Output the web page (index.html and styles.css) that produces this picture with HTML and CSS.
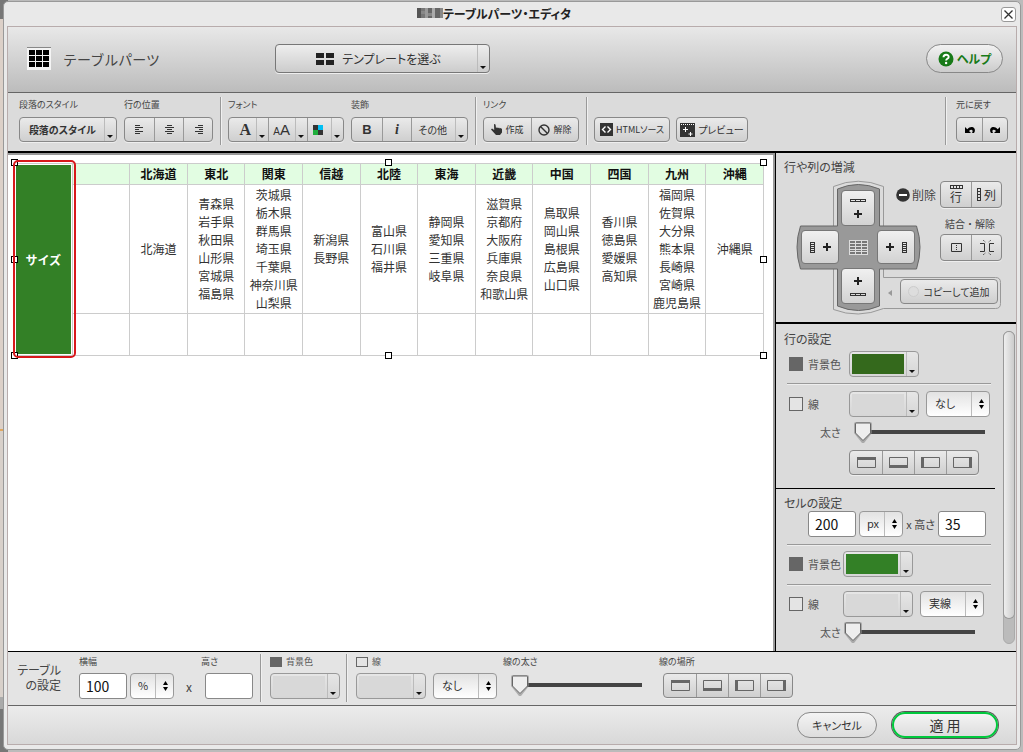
FILE: index.html
```html
<!DOCTYPE html>
<html lang="ja">
<head>
<meta charset="utf-8">
<title>テーブルパーツ・エディタ</title>
<link rel="stylesheet" href="styles.css">
</head>
<body>
<svg class="defs" width="0" height="0" aria-hidden="true">
  <symbol id="updown" viewBox="0 0 5 10"><path d="M2.500 0 5 4H0zM0 6h5L2.500 10z"/></symbol>
  <symbol id="line-top" viewBox="0 0 19 11"><path fill="none" stroke="#666" d="M.5.5h18v10H.5z"/><path fill="#666" d="M0 0h19v3H0z"/></symbol>
  <symbol id="line-bottom" viewBox="0 0 19 11"><path fill="none" stroke="#666" d="M.5.5h18v10H.5z"/><path fill="#666" d="M0 8h19v3H0z"/></symbol>
  <symbol id="line-left" viewBox="0 0 19 11"><path fill="none" stroke="#666" d="M.5.5h18v10H.5z"/><path fill="#666" d="M0 0h3v11H0z"/></symbol>
  <symbol id="line-right" viewBox="0 0 19 11"><path fill="none" stroke="#666" d="M.5.5h18v10H.5z"/><path fill="#666" d="M16 0h3v11h-3z"/></symbol>
  <symbol id="row-strip" viewBox="0 0 16 3"><path d="M0 0h16v3H0zM1 1v1h4V1zM6 1v1h4V1zM11 1v1h4V1z" fill="#333" fill-rule="evenodd"/></symbol>
  <symbol id="col-strip" viewBox="0 0 5 11"><path d="M0 0h5v11H0zM1 1v1h3V1zM1 3v1h3V3zM1 5v1h3V5zM1 7v1h3V7zM1 9v1h3V9z" fill="#333" fill-rule="evenodd"/></symbol>
  <symbol id="plus" viewBox="0 0 8 8"><path fill="#222" d="M3 0h2v3h3v2H5v3H3V5H0V3h3z"/></symbol>
</svg>

<main class="window">
  <header class="titlebar">
    <h1 class="title">
      <svg width="26" height="10" viewBox="0 0 26 10" aria-hidden="true"><path fill="#555" d="M0 0h4v10H0z"/><path fill="#777" d="M4 0h4v10H4z"/><path fill="#999" d="M8 0h3v10H8z"/><path fill="#666" d="M11 0h4v10h-4z"/><path fill="#aaa" d="M15 0h3v10h-3z"/><path fill="#666" d="M18 0h5v10h-5z"/><path fill="#888" d="M23 0h3v10h-3zM4 3h4v3H4zM11 5h4v3h-4z"/></svg>テーブルパーツ・エディタ
    </h1>
    <button class="close" aria-label="閉じる"><svg width="9" height="9" viewBox="0 0 9 9"><path d="M.5.5l8 8M8.500.5l-8 8" stroke="#333" stroke-width="1.300"/></svg></button>
  </header>

  <div class="frame">
    <div class="header">
      <svg width="24" height="23" viewBox="0 0 24 23" aria-hidden="true"><path fill="#f4f4f4" d="M0 0h24v23H0z"/><path fill="#888" d="M0 0h24v1H0z"/><path d="M2 3h6v5H2zM9 3h6v5H9zM16 3h6v5h-6zM2 9h6v5H2zM9 9h6v5H9zM16 9h6v5h-6zM2 15h6v5H2zM9 15h6v5H9zM16 15h6v5h-6z"/></svg>
      <span class="part-name">テーブルパーツ</span>
      <button class="template">
        <span class="template-label"><svg width="18" height="12" viewBox="0 0 18 12"><path fill="#222" d="M0 0h8v5H0zM10 0h8v5h-8zM0 7h8v5H0zM10 7h8v5h-8z"/></svg>テンプレートを選ぶ</span>
        <span class="drop"></span>
      </button>
      <button class="help"><svg width="16" height="16" viewBox="0 0 16 16"><circle cx="8" cy="8" r="7.500" fill="#187a18"/><path d="M5.500 6.200c0-3.400 5.200-3.200 5.200-.3 0 1.900-2.600 1.900-2.600 3.500" fill="none" stroke="#fff" stroke-width="1.900"/><circle cx="8.100" cy="12" r="1.200" fill="#fff"/></svg>ヘルプ</button>
    </div>

    <div class="toolbar">
      <div class="group">
        <span class="caption">段落のスタイル</span>
        <div class="buttons"><button class="with-drop w-para"><b>段落のスタイル</b><span class="drop"></span></button></div>
      </div>
      <div class="group">
        <span class="caption">行の位置</span>
        <div class="buttons">
          <button class="w29" aria-label="左寄せ"><svg width="9" height="9" viewBox="0 0 9 9"><path stroke="#333" d="M0 .5h5M0 2.500h8M0 4.500h4M0 6.500h8M0 8.500h5"/></svg></button>
          <button class="w29" aria-label="中央寄せ"><svg width="9" height="9" viewBox="0 0 9 9"><path stroke="#333" d="M2 .5h5M0 2.500h9M2 4.500h5M0 6.500h9M2 8.500h5"/></svg></button>
          <button class="w29" aria-label="右寄せ"><svg width="9" height="9" viewBox="0 0 9 9"><path stroke="#333" d="M4 .5h5M1 2.500h8M5 4.500h4M1 6.500h8M4 8.500h5"/></svg></button>
        </div>
      </div>
      <span class="rule"></span>
      <div class="group">
        <span class="caption">フォント</span>
        <div class="buttons">
          <button class="with-drop w-font"><span class="serif-a">A</span><span class="drop"></span></button>
          <button class="with-drop w-font"><span class="size-a"><small>A</small>A</span><span class="drop"></span></button>
          <button class="with-drop w-color" aria-label="文字色"><svg width="10" height="10" viewBox="0 0 10 10"><path fill="#333" d="M0 0h10v10H0z"/><path fill="#00bff3" d="M5 0h5v5H5z"/><path fill="#1fae3b" d="M0 5h5v5H0z"/></svg><span class="drop"></span></button>
        </div>
      </div>
      <div class="group">
        <span class="caption">装飾</span>
        <div class="buttons">
          <button class="w30"><span class="bold-b">B</span></button>
          <button class="w29"><span class="italic-i">i</span></button>
          <button class="with-drop w-other">その他<span class="drop"></span></button>
        </div>
      </div>
      <span class="rule"></span>
      <div class="group">
        <span class="caption">リンク</span>
        <div class="buttons">
          <button class="w-link"><svg width="11" height="11" viewBox="0 0 11 11"><path fill="#333" d="M3 0l1.500.4L5 4l1-.8 1 1 1-.7.8 1 .9-.5L11 5v3.500L9 11H5L0 5.500l1-1L3.200 6z"/></svg>作成</button>
          <button class="w-link"><svg width="12" height="12" viewBox="0 0 12 12"><circle cx="6" cy="6" r="5" fill="none" stroke="#333" stroke-width="1.400"/><path d="M2.500 2.500l7 7" stroke="#333" stroke-width="1.400"/></svg>解除</button>
        </div>
      </div>
      <span class="rule"></span>
      <div class="group actions">
        <div class="buttons"><button class="w-html"><svg width="13" height="13" viewBox="0 0 13 13"><path fill="#333" d="M0 0h13v13H0z"/><path fill="none" stroke="#fff" stroke-width="1.400" d="M5.500 3.500l-3 3 3 3M7.500 3.500l3 3-3 3"/></svg>HTMLソース</button></div>
        <div class="buttons"><button class="w-preview"><svg width="15" height="14" viewBox="0 0 15 14"><path fill="#333" d="M0 0h15v14H0z"/><path stroke="#fff" d="M1 1.500h13" stroke-dasharray="1 1"/><path stroke="#fff" d="M5.500 4v5M3 6.500h5M10.500 9v4M8.500 11h4"/></svg>プレビュー</button></div>
      </div>
      <span class="rule last-rule"></span>
      <div class="group history">
        <span class="caption">元に戻す</span>
        <div class="buttons">
          <button class="w25" aria-label="元に戻す"><svg width="10" height="8" viewBox="0 0 10 8"><path d="M0 1v6h6L4 5c1.500-1.500 3-1.600 3.500-.4.300.9 0 1.800-.7 2.400H9C10.600 4.500 10 2 8 1.200 6 .4 4 1.300 2.300 3.200z"/></svg></button>
          <button class="w25" aria-label="やり直す"><svg width="10" height="8" viewBox="0 0 10 8"><path d="M10 1v6H4l2-2C4.500 3.500 3 3.400 2.500 4.600c-.3.900 0 1.800.7 2.400H1C-.6 4.500 0 2 2 1.200 4 .4 6 1.300 7.700 3.200z"/></svg></button>
        </div>
      </div>
    </div>

    <div class="work">
      <section class="canvas">
        <div class="sheet">
          <table class="regions">
            <colgroup><col><col><col><col><col><col><col><col><col><col><col><col><col></colgroup>
            <tr>
              <th class="selected" rowspan="3">サイズ</th>
              <th></th><th>北海道</th><th>東北</th><th>関東</th><th>信越</th><th>北陸</th><th>東海</th><th>近畿</th><th>中国</th><th>四国</th><th>九州</th><th>沖縄</th>
            </tr>
            <tr>
              <td></td>
              <td>北海道</td>
              <td>青森県<br>岩手県<br>秋田県<br>山形県<br>宮城県<br>福島県</td>
              <td>茨城県<br>栃木県<br>群馬県<br>埼玉県<br>千葉県<br>神奈川県<br>山梨県</td>
              <td>新潟県<br>長野県</td>
              <td>富山県<br>石川県<br>福井県</td>
              <td>静岡県<br>愛知県<br>三重県<br>岐阜県</td>
              <td>滋賀県<br>京都府<br>大阪府<br>兵庫県<br>奈良県<br>和歌山県</td>
              <td>鳥取県<br>岡山県<br>島根県<br>広島県<br>山口県</td>
              <td>香川県<br>徳島県<br>愛媛県<br>高知県</td>
              <td>福岡県<br>佐賀県<br>大分県<br>熊本県<br>長崎県<br>宮崎県<br>鹿児島県</td>
              <td>沖縄県</td>
            </tr>
            <tr class="blank"><td></td><td></td><td></td><td></td><td></td><td></td><td></td><td></td><td></td><td></td><td></td><td></td></tr>
          </table>
          <i class="handle nw"></i><i class="handle n"></i><i class="handle ne"></i>
          <i class="handle w"></i><i class="handle e"></i>
          <i class="handle sw"></i><i class="handle s"></i><i class="handle se"></i>
          <i class="marker"></i>
        </div>
      </section>

      <aside class="side">
        <section class="structure">
          <h2>行や列の増減</h2>
          <div class="insert">
            <div class="pad">
              <svg class="pad-shape" width="206" height="134" viewBox="0 0 206 134" aria-hidden="true">
                <path d="M38.500 46V5.500Q63-5 88.500 5.500V46M88.500 88v8.500h112q5 0 5 5v21q0 5-5 5h-112Q63 138 38.500 128.500V88" fill="none" stroke="#999"/>
                <path d="M42.500 8Q63-1 84.500 8v37h37q7 21 0 43h-37v37q-21 9-42 0V88h-37q-7-22 0-43h37z" fill="#999" stroke="#666"/>
                <path d="M97 109v6l-4-3z" fill="#999"/>
              </svg>
              <div class="pad-grid">
                <button class="up" aria-label="上に行を追加"><svg width="16" height="3"><use href="#row-strip"/></svg><svg width="8" height="8"><use href="#plus"/></svg></button>
                <button class="left" aria-label="左に列を追加"><svg width="5" height="11"><use href="#col-strip"/></svg><svg width="8" height="8"><use href="#plus"/></svg></button>
                <svg class="center" width="19" height="15" viewBox="0 0 19 15" aria-hidden="true"><path fill="#ddd" d="M0 0h19v15H0z"/><path fill="#777" d="M1 1h5v2H1zM7 1h5v2H7zM13 1h5v2h-5zM1 4h5v2H1zM7 4h5v2H7zM13 4h5v2h-5zM1 7h5v2H1zM7 7h5v2H7zM13 7h5v2h-5zM1 10h5v1H1zM7 10h5v1H7zM13 10h5v1h-5zM1 12h5v2H1zM7 12h5v2H7zM13 12h5v2h-5z"/></svg>
                <button class="right" aria-label="右に列を追加"><svg width="8" height="8"><use href="#plus"/></svg><svg width="5" height="11"><use href="#col-strip"/></svg></button>
                <button class="down" aria-label="下に行を追加"><svg width="8" height="8"><use href="#plus"/></svg><svg width="16" height="3"><use href="#row-strip"/></svg></button>
              </div>
            </div>
            <div class="ops">
              <div class="delete">
                <svg width="14" height="14" viewBox="0 0 14 14" aria-hidden="true"><circle cx="7" cy="7" r="6.800" fill="#333"/><path fill="#fff" d="M3 6h8v2H3z"/></svg>
                <span>削除</span>
                <div class="buttons tall">
                  <button class="stack"><svg width="13" height="4" viewBox="0 0 13 4"><path d="M0 0h13v4H0zM1 1v2h2V1zM4 1v2h2V1zM7 1v2h2V1zM10 1v2h2V1z" fill="#333" fill-rule="evenodd"/></svg>行</button>
                  <button><svg width="4" height="13" viewBox="0 0 4 13"><path d="M0 0h4v13H0zM1 1v2h2V1zM1 4v2h2V4zM1 7v2h2V7zM1 10v2h2v-2z" fill="#333" fill-rule="evenodd"/></svg>列</button>
                </div>
              </div>
              <span class="merge-label">結合・解除</span>
              <div class="buttons tall">
                <button aria-label="結合"><svg width="11" height="9" viewBox="0 0 11 9"><path fill="none" stroke="#333" d="M.5.5h10v8H.5z"/><path stroke="#333" d="M5.500 2v5" stroke-dasharray="1 1"/></svg></button>
                <button aria-label="解除"><svg width="16" height="15" viewBox="0 0 16 15"><path fill="none" stroke="#333" d="M1 3.500h4.500v8H1M15 3.500h-4.500v8H15"/><path fill="none" stroke="#333" stroke-dasharray="1 1" d="M4 0l3 2.500M12 0L9 2.500M4 15l3-2.500M12 15l-3-2.500"/></svg></button>
              </div>
              <button class="copy"><i class="lamp"></i>コピーして追加</button>
            </div>
          </div>
        </section>

        <div class="properties">
          <div class="prop-list">
            <section class="row-props">
              <h2>行の設定</h2>
              <div class="prop">
                <label class="check"><input type="checkbox" checked>背景色</label>
                <button class="picker" aria-label="行の背景色"><i class="swatch row-green"></i><span class="drop"></span></button>
              </div>
              <hr>
              <div class="prop">
                <label class="check"><input type="checkbox">線</label>
                <button class="picker" aria-label="行の線の色"><i class="swatch"></i><span class="drop"></span></button>
                <span class="select w64"><select aria-label="行の線の種類"><option>なし</option></select><svg width="5" height="10"><use href="#updown"/></svg></span>
              </div>
              <div class="prop thick">
                <label class="thick-label" for="row-width">太さ</label>
                <input id="row-width" type="range" min="0" max="20" value="0">
              </div>
              <div class="prop edges">
                <div class="buttons">
                  <button class="w32" aria-label="上"><svg width="19" height="11"><use href="#line-top"/></svg></button>
                  <button class="w32" aria-label="下"><svg width="19" height="11"><use href="#line-bottom"/></svg></button>
                  <button class="w32" aria-label="左"><svg width="19" height="11"><use href="#line-left"/></svg></button>
                  <button class="w32" aria-label="右"><svg width="19" height="11"><use href="#line-right"/></svg></button>
                </div>
              </div>
            </section>
            <section class="cell-props">
              <h2>セルの設定</h2>
              <div class="prop size">
                <input class="num" type="text" value="200" aria-label="幅">
                <span class="select w44"><select aria-label="単位"><option>px</option></select><svg width="5" height="10"><use href="#updown"/></svg></span>
                <label for="cell-height">x 高さ</label>
                <input class="num" id="cell-height" type="text" value="35">
              </div>
              <hr>
              <div class="prop">
                <label class="check"><input type="checkbox" checked>背景色</label>
                <button class="picker" aria-label="セルの背景色"><i class="swatch cell-green"></i><span class="drop"></span></button>
              </div>
              <hr>
              <div class="prop">
                <label class="check"><input type="checkbox">線</label>
                <button class="picker" aria-label="セルの線の色"><i class="swatch"></i><span class="drop"></span></button>
                <span class="select w64"><select aria-label="セルの線の種類"><option>実線</option></select><svg width="5" height="10"><use href="#updown"/></svg></span>
              </div>
              <div class="prop thick">
                <label class="thick-label" for="cell-width">太さ</label>
                <input id="cell-width" type="range" min="0" max="20" value="0">
              </div>
            </section>
          </div>
          <div class="scrollbar"><i class="scroll-thumb"></i></div>
        </div>
      </aside>
    </div>

    <section class="table-props">
      <h2>テーブル<br>の設定</h2>
      <div class="field width-field">
        <label class="caption" for="table-width">横幅</label>
        <div class="controls">
          <input class="num" id="table-width" type="text" value="100">
          <span class="select w44"><select aria-label="横幅の単位"><option>%</option></select><svg width="5" height="10"><use href="#updown"/></svg></span>
          <span class="times">x</span>
        </div>
      </div>
      <div class="field height-field">
        <label class="caption" for="table-height">高さ</label>
        <div class="controls"><input class="num" id="table-height" type="text"></div>
      </div>
      <span class="rule"></span>
      <div class="field">
        <label class="check caption"><input type="checkbox" checked>背景色</label>
        <div class="controls"><button class="picker" aria-label="表の背景色"><i class="swatch"></i><span class="drop"></span></button></div>
      </div>
      <span class="rule"></span>
      <div class="field">
        <label class="check caption"><input type="checkbox">線</label>
        <div class="controls">
          <button class="picker" aria-label="表の線の色"><i class="swatch"></i><span class="drop"></span></button>
          <span class="select w64"><select aria-label="表の線の種類"><option>なし</option></select><svg width="5" height="10"><use href="#updown"/></svg></span>
        </div>
      </div>
      <div class="field line-width">
        <label class="caption" for="table-line">線の太さ</label>
        <div class="controls"><input id="table-line" type="range" min="0" max="20" value="0"></div>
      </div>
      <div class="field line-place">
        <span class="caption">線の場所</span>
        <div class="controls buttons">
          <button class="w32" aria-label="上"><svg width="19" height="11"><use href="#line-top"/></svg></button>
          <button class="w32" aria-label="下"><svg width="19" height="11"><use href="#line-bottom"/></svg></button>
          <button class="w32" aria-label="左"><svg width="19" height="11"><use href="#line-left"/></svg></button>
          <button class="w32" aria-label="右"><svg width="19" height="11"><use href="#line-right"/></svg></button>
        </div>
      </div>
    </section>

    <footer class="footer">
      <button class="cancel">キャンセル</button>
      <button class="apply">適 用</button>
    </footer>
  </div>
</main>
</body>
</html>
```

FILE: styles.css
```css
* { box-sizing: border-box; }

body {
  margin: 0;
  height: 100vh;
  min-height: 752px;
  padding: 1px 2px 2px 3px;
  display: flex;
  background:
    linear-gradient(#777 0 19px, #dcd0c8 19px 429px, #e0a860 429px 431px, #d8d0ca 431px 697px, #aaa 697px 709px, #777 709px) 0 0 / 8px 100% no-repeat,
    #bbb;
  font: 11px "Noto Sans CJK JP", "Noto Sans", sans-serif;
  font-feature-settings: "palt";
  color: #444;
}

.defs { position: absolute; }
h1, h2 { margin: 0; font-weight: 400; }
svg { display: block; flex: none; }
button, input, select { font: inherit; font-feature-settings: inherit; color: #333; margin: 0; }
button { padding: 0; cursor: pointer; }

.window {
  flex: 1;
  display: flex;
  flex-direction: column;
  padding: 0 3px 4px;
  background: #e9e9e9;
  border: 1px solid #999;
  border-radius: 5px;
  min-width: 0;
}

.titlebar {
  height: 24px;
  display: flex;
  align-items: center;
  position: relative;
  flex: none;
}
.title {
  flex: 1;
  display: flex;
  justify-content: center;
  align-items: center;
  padding: 0 36px 2px 0;
  font-size: 12px;
  font-weight: 700;
  color: #222;
}
.close {
  position: absolute;
  right: 1px;
  width: 15px;
  height: 15px;
  display: grid;
  place-items: center;
  background: #fff;
  border: 1px solid #999;
  border-radius: 3px;
}

.frame {
  flex: 1;
  display: flex;
  flex-direction: column;
  border: 1px solid #b8acac;
  min-height: 0;
}

.header {
  height: 66px;
  flex: none;
  display: flex;
  align-items: center;
  padding: 0 13px 2px 19px;
  background: linear-gradient(#e8e8e8, #bcbcbc);
  border-bottom: 1px solid #666;
}
.part-name { width: 212px; margin-left: 12px; font-size: 14px; font-feature-settings: normal; }
.template {
  display: flex;
  width: 215px;
  height: 29px;
  margin-right: auto;
  border: 1px solid #777;
  border-radius: 4px;
  background: linear-gradient(#eee, #ccc);
  box-shadow: 0 1px #eee;
}
.template-label { flex: 1; align-self: center; display: flex; justify-content: center; align-items: center; gap: 8px; padding-left: 4px; font-size: 12px; }
.help {
  width: 77px;
  height: 29px;
  display: flex;
  align-items: center;
  justify-content: center;
  gap: 3px;
  font-size: 12px;
  font-weight: 700;
  color: #187a18;
  border: 1px solid #888;
  border-radius: 15px;
  background: linear-gradient(#f2f2f2, #ccc);
}

.drop { position: relative; width: 12px; align-self: stretch; flex: none; border-left: 1px solid #bbb; }
.drop::after {
  content: "";
  position: absolute;
  right: 3px;
  bottom: 3px;
  border: 3px solid transparent;
  border-top-color: #111;
  border-bottom: 0;
}

.toolbar {
  height: 60px;
  flex: none;
  display: flex;
  align-items: flex-start;
  gap: 7px;
  padding: 4px 8px 0 11px;
  background: #dbdbdb;
  border-bottom: 2px solid #000;
}
.rule { width: 1px; height: 48px; background: #999; box-shadow: 1px 0 #f0f0f0; flex: none; }
.caption { display: flex; align-items: center; height: 16px; font-size: 9px; line-height: 16px; color: #444; white-space: nowrap; }
.group { display: flex; flex-direction: column; gap: 4px; flex: none; }
.group.actions { flex-direction: row; gap: 6px; padding-top: 20px; }
.history { margin-left: 3px; }
.last-rule { margin-left: auto; }

.buttons {
  display: flex;
  align-self: flex-start;
  border: 1px solid #888;
  border-radius: 4px;
  background: linear-gradient(#eaeaea, #cfcfcf);
  box-shadow: 0 1px #eee;
}
.buttons button {
  display: flex;
  align-items: center;
  justify-content: center;
  gap: 3px;
  height: 23px;
  border: 0;
  background: none;
  white-space: nowrap;
}
.buttons button + button { border-left: 1px solid #999; }
.buttons .with-drop { justify-content: flex-end; gap: 8px; }
.buttons .w-font { gap: 5px; }
.w25 { width: 25px; }
.w29 { width: 29px; }
.w30 { width: 30px; }
.w32 { width: 32px; }
.w-para { width: 96px; font-size: 10px; }
.w-font { width: 39px; }
.w-color { width: 36px; }
.w-other { width: 56px; font-size: 10px; }
.w-link { width: 47px; font-size: 9px; }
.w-html { width: 74px; font-size: 9px; }
.w-preview { width: 70px; font-size: 10px; }
.serif-a { font: 700 16px "Liberation Serif", serif; }
.size-a { font: 15px "Liberation Sans", sans-serif; }
.size-a small { font-size: 10px; }
.bold-b { font: 700 13px "Liberation Sans", sans-serif; }
.italic-i { font: italic 700 14px "Liberation Serif", serif; }

.work { flex: 1; display: flex; min-height: 0; border-bottom: 1px solid #000; }
.canvas {
  flex: 1;
  min-width: 0;
  padding: 8px 9px 0 6px;
  background: #fff;
  border: solid #999;
  border-width: 2px 2px 0 0;
}
.sheet { position: relative; }
.regions {
  width: 100%;
  table-layout: fixed;
  border-collapse: collapse;
  font-size: 12px;
  line-height: 18px;
  font-feature-settings: normal;
  color: #333;
}
.regions th, .regions td { padding: 1px 0; border: 1px solid #ccc; text-align: center; white-space: nowrap; }
.regions th { height: 21px; background: #e2fde2; color: #111; }
.regions .selected { background: #338026; color: #fff; box-shadow: inset 0 0 0 1px #fff; }
.regions .blank td { height: 42px; }
.handle { position: absolute; width: 7px; height: 7px; background: #fff; border: 1px solid #000; }
.nw, .n, .ne { top: -4px; }
.w, .e { top: calc(50% - 4px); }
.sw, .s, .se { bottom: -3px; }
.nw, .w, .sw { left: -3px; }
.n, .s { left: calc(50% - 4px); }
.ne, .e, .se { right: -3px; }
.marker {
  position: absolute;
  top: -3px;
  bottom: -2px;
  left: -1px;
  width: 63px;
  border: 2px solid #d8181c;
  border-radius: 5px;
}

.side {
  width: 241px;
  flex: none;
  display: flex;
  flex-direction: column;
  background: #dbdbdb;
  border-left: 1px solid #000;
}
h2 { font-size: 12px; line-height: 16px; }
.structure { height: 171px; flex: none; padding: 6px 14px 0 8px; border-bottom: 2px solid #000; }
.insert { display: grid; grid-template-columns: 89px 118px; justify-content: end; margin-top: 6px; }
.pad { position: relative; }
.pad-shape { position: absolute; top: 0; left: 0; overflow: visible; }
.pad-grid {
  position: relative;
  width: 114px;
  margin: 9px 0 0 6px;
  display: grid;
  grid-template: 36px 34px 36px / 38px 34px 38px;
  gap: 4px 2px;
}
.pad-grid button {
  display: flex;
  align-items: center;
  justify-content: center;
  gap: 8px;
  background: linear-gradient(#f0f0f0, #d2d2d2);
  border: 1px solid #777;
  border-radius: 4px;
}
.pad-grid .up, .pad-grid .down { grid-column: 2; flex-direction: column; }
.pad-grid .left { grid-column: 1; }
.pad-grid .center { place-self: center; }
.ops { display: flex; flex-direction: column; align-items: flex-end; }
.delete { display: flex; align-items: center; gap: 2px; font-size: 12px; }
.delete .buttons { margin-left: 2px; }
.buttons.tall { align-self: flex-end; }
.buttons.tall button { height: 25px; width: 30px; font-size: 12px; }
.buttons .stack { flex-direction: column; gap: 1px; line-height: 14px; }
.merge-label { height: 26px; line-height: 32px; padding-right: 7px; font-size: 10px; font-feature-settings: normal; }
.copy {
  width: 98px;
  height: 25px;
  margin: 18px 4px 0 0;
  display: flex;
  align-items: center;
  justify-content: center;
  gap: 4px;
  border: 1px solid #888;
  border-radius: 4px;
  background: linear-gradient(#eaeaea, #cfcfcf);
  font-size: 10px;
  white-space: nowrap;
}
.lamp { width: 11px; height: 11px; border-radius: 50%; border: 1px solid #ccc; background: #ddd; }

.properties { flex: 1; display: flex; min-height: 0; }
.prop-list { flex: 1; min-width: 0; }
.row-props { height: 165px; padding: 7px 0 0 8px; border-bottom: 1px solid #000; }
.cell-props { padding: 6px 0 0 8px; }
.prop { display: flex; align-items: center; height: 26px; padding-left: 5px; font-size: 11px; }
.check { display: flex; align-items: center; gap: 5px; color: #555; white-space: nowrap; }
.prop .check { width: 60px; }
.cell-props .prop .check { width: 54px; }
.check input {
  appearance: none;
  width: 14px;
  height: 14px;
  border: 1px solid #666;
  background: #e4e4e4;
}
.check input:checked { background: #666; }
.caption.check input { width: 12px; height: 10px; }
.caption.check { gap: 4px; }
hr { height: 1px; margin: 6px 4px 7px 3px; border: 0; background: #999; box-shadow: 0 1px #eee; }
.cell-props hr { margin: 7px 4px 6px 3px; }
.row-props h2 { margin-bottom: 4px; }
.prop .select { margin-left: 7px; }
.picker {
  display: flex;
  width: 70px;
  height: 26px;
  flex: none;
  border: 1px solid #999;
  border-radius: 4px;
  background: linear-gradient(#e6e6e6, #d6d6d6);
}
.swatch { flex: 1; margin: 2px; background: #d8d8d8; }
.row-green { background: #34691c; }
.cell-green { background: #338026; }
.select { position: relative; display: block; height: 26px; flex: none; }
.select select {
  appearance: none;
  width: 100%;
  height: 100%;
  padding: 0 18px 2px 8px;
  border: 1px solid #999;
  border-radius: 4px;
  background: linear-gradient(90deg, transparent calc(100% - 18px), #bbb calc(100% - 18px) calc(100% - 17px), transparent calc(100% - 17px)), linear-gradient(#e2e2e2, #fff);
}
.select svg { position: absolute; right: 6px; top: 8px; pointer-events: none; }
.w44 { width: 44px; }
.w44 select { padding-left: 7px; }
.w64 { width: 64px; }
.thick { height: 30px; }
.thick-label { width: 63px; padding-left: 31px; color: #555; white-space: nowrap; }
.cell-props .thick-label { width: 53px; }
.edges { height: 30px; padding-left: 65px; }
.edges .buttons { align-self: center; }
.num {
  width: 48px;
  height: 26px;
  padding: 0 6px;
  border: 1px solid #888;
  border-radius: 3px;
  background: #fff;
  color: #111;
  font-size: 14px;
}
.prop.size { padding-left: 24px; gap: 3px; }
.prop.size .select { margin-left: 0; }
.prop.size label { width: 29px; white-space: nowrap; font-size: 11px; text-align: right; }

input[type="range"] { appearance: none; width: 133px; height: 24px; background: none; }
input[type="range"]::-webkit-slider-runnable-track {
  height: 24px;
  background: linear-gradient(transparent 10px, #444 10px 14px, transparent 14px) 12px 0 / calc(100% - 12px) 24px no-repeat;
}
input[type="range"]::-webkit-slider-thumb {
  appearance: none;
  width: 22px;
  height: 24px;
  background: url("data:image/svg+xml,%3Csvg xmlns='http://www.w3.org/2000/svg' width='22' height='24'%3E%3Cpath d='M2 4q0-2 2-2h14q2 0 2 2v9l-8 10h-2l-8-10z' fill='%23888' opacity='.6'/%3E%3Cpath d='M3.500 4q0-1 1-1h13q1 0 1 1v9L11 20.500 3.500 13z' fill='%23eee' stroke='%23666'/%3E%3C/svg%3E");
}

.scrollbar { width: 12px; margin: 7px 1px 7px 8px; flex: none; border: 1px solid #aaa; border-radius: 6px; background: #bbb; }
.scroll-thumb { display: block; width: 100%; height: 92%; border-radius: 6px; background: linear-gradient(90deg, #eee, #ccc); box-shadow: 0 0 0 1px #999; }

.table-props {
  height: 54px;
  flex: none;
  display: flex;
  align-items: flex-start;
  padding: 2px 9px 0 8px;
  background: #e4e4e4;
  border-bottom: 1px solid #666;
}
.table-props h2 { width: 45px; margin: 8px 18px 0 0; line-height: 15px; text-align: right; white-space: nowrap; flex: none; }
.field { display: flex; flex-direction: column; gap: 3px; flex: none; }
.field .controls { display: flex; align-items: center; gap: 3px; }
.field .buttons.controls { gap: 0; }
.times { width: 24px; text-align: center; font-size: 12px; }
.height-field .controls { padding-left: 4px; }
.table-props .rule { margin: 0 9px 0 7px; }
.table-props .rule ~ .rule { margin-left: 6px; }
.table-props .picker + .select { margin-left: 4px; }
.line-width { margin-left: 6px; }
.line-width input { margin-left: 6px; }
.line-place { margin-left: 17px; }
.line-place .controls { margin-left: 4px; }

.footer {
  height: 38px;
  flex: none;
  display: flex;
  align-items: center;
  justify-content: flex-end;
  gap: 15px;
  padding-right: 18px;
  background: linear-gradient(#ececec, #d8d8d8);
}
.cancel { width: 80px; height: 26px; border: 1px solid #888; border-radius: 13px; background: linear-gradient(#f4f4f4, #ddd); }
.apply {
  width: 106px;
  height: 26px;
  border: 2px solid #00c83c;
  border-radius: 14px;
  background: linear-gradient(#f4f4f4, #ddd);
  box-shadow: 0 0 0 1px #555;
  font-size: 14px;
}
```
